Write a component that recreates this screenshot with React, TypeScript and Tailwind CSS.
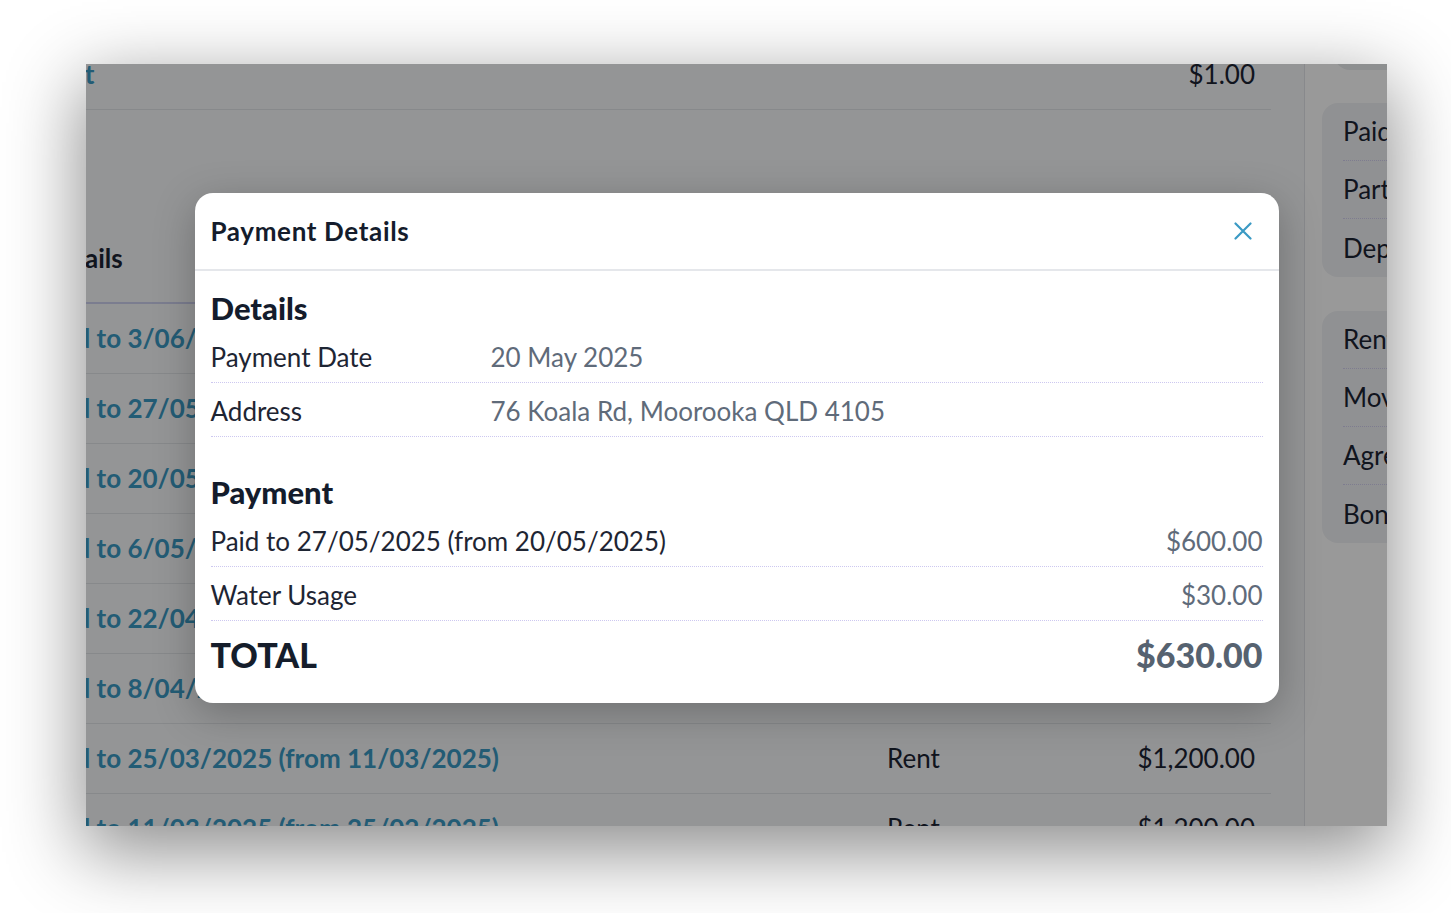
import React from 'react';

const payments = [
  { desc: 'Paid to 3/06/2025 (from 27/05/2025)', type: 'Rent', amount: '$600.00' },
  { desc: 'Paid to 27/05/2025 (from 20/05/2025)', type: 'Rent', amount: '$630.00' },
  { desc: 'Paid to 20/05/2025 (from 6/05/2025)', type: 'Rent', amount: '$1,200.00' },
  { desc: 'Paid to 6/05/2025 (from 22/04/2025)', type: 'Rent', amount: '$1,200.00' },
  { desc: 'Paid to 22/04/2025 (from 8/04/2025)', type: 'Rent', amount: '$1,200.00' },
  { desc: 'Paid to 8/04/2025 (from 25/03/2025)', type: 'Rent', amount: '$1,200.00' },
  { desc: 'Paid to 25/03/2025 (from 11/03/2025)', type: 'Rent', amount: '$1,200.00' },
  { desc: 'Paid to 11/03/2025 (from 25/02/2025)', type: 'Rent', amount: '$1,200.00' },
];

const sideGroups = [
  ['Paid rent', 'Part payment', 'Deposit'],
  ['Rent ledger', 'Move in', 'Agreement', 'Bond'],
];

function CloseIcon() {
  return (
    <svg width="18" height="18" viewBox="0 0 18 18" fill="none" stroke="currentColor" strokeWidth="2.2" strokeLinecap="round">
      <path d="M1.5 1.5L16.5 16.5M16.5 1.5L1.5 16.5" />
    </svg>
  );
}

function DetailRow({ label, value }: { label: string; value: string }) {
  return (
    <div className="flex h-[54px] items-center border-b border-dotted border-[#cdc8f0] pt-1 text-[26px]">
      <span className="w-[280px] shrink-0 text-[#1e2533]">{label}</span>
      <span className="text-[#5f6b7a]">{value}</span>
    </div>
  );
}

function LineRow({ label, value }: { label: string; value: string }) {
  return (
    <div className="flex h-[54px] items-center justify-between border-b border-dotted border-[#cdc8f0] pt-1 text-[26px]">
      <span className="text-[#1e2533]">{label}</span>
      <span className="text-[#5f6b7a]">{value}</span>
    </div>
  );
}

function PaymentModal() {
  return (
    <div className="w-[1084px] overflow-hidden rounded-[18px] bg-white shadow-[0_10px_40px_rgba(0,0,0,0.25)]">
      {/* Header */}
      <div className="flex h-[78px] items-center justify-between border-b-2 border-[#e5e7eb] pl-4 pr-[27px]">
        <h2 className="text-[26px] font-bold tracking-[0.025em] text-[#141c2c]">Payment Details</h2>
        <button className="text-[#3b9ac4]">
          <CloseIcon />
        </button>
      </div>

      {/* Body */}
      <div className="px-4 pt-[19px] pb-4">
        <h3 className="text-[31px] leading-[36px] font-black text-[#141c2c]">Details</h3>
        <div className="mt-[3px]">
          <DetailRow label="Payment Date" value="20 May 2025" />
          <DetailRow label="Address" value="76 Koala Rd, Moorooka QLD 4105" />
        </div>

        <h3 className="mt-[37px] text-[31px] leading-[36px] font-black text-[#141c2c]">Payment</h3>
        <div className="mt-[3px]">
          <LineRow label="Paid to 27/05/2025 (from 20/05/2025)" value="$600.00" />
          <LineRow label="Water Usage" value="$30.00" />
        </div>
        <div className="flex h-[66px] items-center justify-between">
          <span className="text-[34px] font-black text-[#151d2b]">TOTAL</span>
          <span className="text-[34px] font-black text-[#566270]">$630.00</span>
        </div>
      </div>
    </div>
  );
}

export default function App() {
  return (
    <div className="min-h-[913px] w-full bg-white pt-[64px] pl-[86px] font-['Lato',sans-serif]">
      <div className="relative h-[762px] w-[1301px] overflow-hidden shadow-[0_22px_70px_4px_rgba(0,0,0,0.45)]">
        {/* Page behind the modal */}
        <div className="flex h-full">
          <div className="-ml-[60px] w-[1278px] shrink-0 bg-[#f7f8fa] pr-[33px]">
            <div className="-mt-[24px]">
              <div className="grid h-[70px] grid-cols-[845px_1fr_auto] items-center border-b border-[#e2e4e8] px-4 text-[26px]">
                <span className="ml-[5px] font-bold text-[#3b9ac4]">Test</span>
                <span />
                <span className="text-[#1c2333]">$1.00</span>
              </div>

              <div className="mt-[132px] grid grid-cols-[845px_1fr_auto] border-b-2 border-[#cdd0ee] px-4 pb-[28px]">
                <span className="text-[26px] leading-8 font-bold text-[#1c2333]">Details</span>
                <span className="text-[26px] leading-8 font-bold text-[#1c2333]">Type</span>
                <span className="text-[26px] leading-8 font-bold text-[#1c2333]">Amount</span>
              </div>

              {payments.map((p) => (
                <div
                  key={p.desc}
                  className="grid h-[70px] grid-cols-[845px_1fr_auto] items-center border-b border-[#e2e4e8] px-4 text-[26px]"
                >
                  <span className="-ml-[2px] font-bold text-[#3b9ac4]">{p.desc}</span>
                  <span className="text-[#1c2333]">{p.type}</span>
                  <span className="text-[#1c2333]">{p.amount}</span>
                </div>
              ))}
            </div>
          </div>

          <div className="w-[300px] shrink-0 border-l border-[#e3e5ea] bg-white pl-[17px]">
            <div className="-mt-[40px] ml-[12px] h-[46px] rounded-2xl bg-[#eceef1]" />
            {sideGroups.map((group, gi) => (
              <div
                key={gi}
                className={`${gi === 0 ? 'mt-[33px]' : 'mt-[34px]'} rounded-2xl bg-[#f1f2f5] px-[21px]`}
              >
                {group.map((item) => (
                  <div
                    key={item}
                    className="flex h-[58px] items-center border-b border-dotted border-[#d2cfee] text-[26px] whitespace-nowrap text-[#1c2333] last:border-b-0"
                  >
                    {item}
                  </div>
                ))}
              </div>
            ))}
          </div>
        </div>

        {/* Overlay + modal */}
        <div className="absolute inset-0 flex items-center justify-center bg-black/40 pt-[6px]">
          <PaymentModal />
        </div>
      </div>
    </div>
  );
}
